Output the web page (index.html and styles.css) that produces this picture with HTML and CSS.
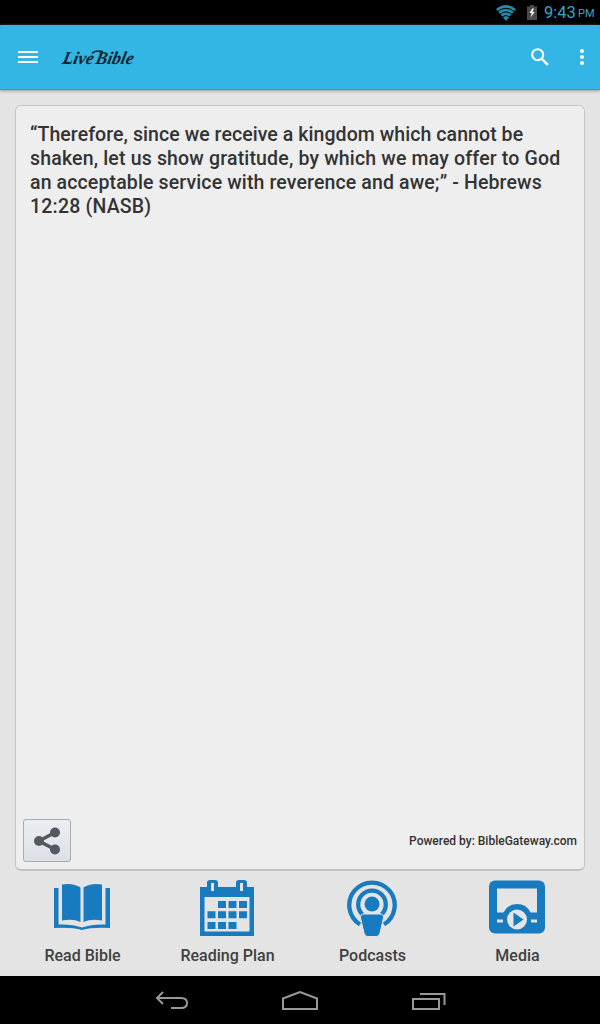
FILE: index.html
```html
<!DOCTYPE html>
<html lang="en">
<head>
<meta charset="utf-8">
<title>LiveBible</title>
<link rel="stylesheet" href="styles.css">
</head>
<body>
<div class="status">
  <svg class="wifi" width="20" height="16" viewBox="0 0 20 16"><path d="M0 4Q10-3.800 20 4L10 16Z" fill="#2689ae"/><g fill="none" stroke="#000" stroke-width="1"><path d="M1 7Q10-.5 19 7M3.500 9.800Q10 4 16.500 9.800M6 12.300Q10 9 14 12.300"/></g></svg>
  <svg class="battery" width="10" height="15" viewBox="0 0 10 15"><path d="M3 0h4v1.500h3V15H0V1.500h3Z" fill="#4a4a4a"/><path d="M5.300 3.500 2.500 8h2.300l-1.300 4.500L7.700 7H5.400l1.600-3.500Z" fill="#fff"/></svg>
  <span class="time">9:43</span><span class="pm">PM</span>
</div>
<header class="bar">
  <svg class="menu" width="20" height="12" viewBox="0 0 20 12"><path d="M0 1h20M0 6h20M0 11h20" stroke="#fff" stroke-width="2"/></svg>
  <svg class="logo" width="76" height="26" viewBox="0 0 76 26"><g transform="translate(4 0) skewX(-12)"><text x="2" y="20" textLength="31" lengthAdjust="spacingAndGlyphs">Live</text><text x="35" y="20" textLength="38" lengthAdjust="spacingAndGlyphs">Bible</text></g><path d="M32 9.500Q35 6 43 7.500M2 19.800Q5 17.500 11 19.500" fill="none" stroke="#10252e" stroke-width="1.400"/></svg>
  <svg class="search" width="18" height="18" viewBox="0 0 18 18" fill="none" stroke="#fff"><circle cx="6.700" cy="6.700" r="5.500" stroke-width="2.100"/><path d="m10.800 10.800 6 6" stroke-width="2.500"/></svg>
  <svg class="more" width="4" height="16" viewBox="0 0 4 16" fill="#fff"><circle cx="2" cy="2" r="2"/><circle cx="2" cy="8" r="2"/><circle cx="2" cy="14" r="2"/></svg>
</header>
<main class="content">
  <section class="card">
    <p class="verse"><span class="l1">“Therefore, since we receive a kingdom which cannot be</span><br><span class="l2">shaken, let us show gratitude, by which we may offer to God</span><br><span class="l3">an acceptable service with reverence and awe;” - Hebrews</span><br><span class="l4">12:28 (NASB)</span></p>
    <div class="foot">
      <button class="share" aria-label="Share"><svg width="28" height="28" viewBox="0 0 28 28" fill="#505a62"><path d="M22 5.500 6 14l16 8.500" fill="none" stroke="#505a62" stroke-width="3.600"/><circle cx="6" cy="14" r="5"/><circle cx="22" cy="5.500" r="5"/><circle cx="22" cy="22.500" r="5"/></svg></button>
      <span class="credit">Powered by: BibleGateway.com</span>
    </div>
  </section>
  <nav class="links">
    <a class="link"><svg width="56" height="58" viewBox="0 0 56 58" fill="#187abf"><path d="M0 9h4.500v36.500Q18 45 28 48.500 38 45 51.500 45.500V9H56v40Q38 48 28 51 18 48 0 49Z"/><path d="M8 5.500Q19 3.500 26.500 8.500V43Q19 39.500 8 41.500ZM48 5.500Q37 3.500 29.500 8.500V43Q37 39.500 48 41.500Z"/></svg><span>Read Bible</span></a>
    <a class="link"><svg width="54" height="58" viewBox="0 0 54 58"><path d="M0 8h7V4q0-3 3-3h5q3 0 3 3v4h18V4q0-3 3-3h5q3 0 3 3v4h7v49H0ZM4.500 18v34.500h45V18ZM11 4v8h3V4Zm29 0v8h3V4Z" fill="#187abf" fill-rule="evenodd"/><path d="M18 22h8v7h-8Zm10.500 0h8v7h-8ZM39 22h8v7h-8ZM7.500 32.300h8v7h-8Zm10.500 0h8v7h-8Zm10.500 0h8v7h-8Zm10.500 0h8v7h-8ZM7.500 43h8v7h-8ZM18 43h8v7h-8Zm10.500 0h8v7h-8Z" fill="#187abf"/></svg><span>Reading Plan</span></a>
    <a class="link"><svg width="52" height="58" viewBox="0 0 52 58"><g fill="none" stroke="#187abf" stroke-width="4.300"><path d="M14 45.500A22.700 22.700 0 1 1 38 45.500"/><path d="M16.500 35.500A13.800 13.800 0 1 1 35.500 35.500"/></g><circle cx="26" cy="25" r="7.500" fill="#187abf"/><path d="M18 35h16q4 0 3.500 4L34 54q-.8 3.500-3.500 3.500h-9q-2.700 0-3.500-3.500L14.500 39q-.5-4 3.500-4Z" fill="#187abf" stroke="#e4e4e4" stroke-width="1"/></svg><span>Podcasts</span></a>
    <a class="link"><svg width="56" height="58" viewBox="0 0 56 58"><rect y="1.500" width="56" height="53" rx="6" fill="#187abf"/><path d="M8 9.500h40v24H41.500A15 15 0 0 0 14.500 33.500H8ZM8 40.500h6v3H8Zm34 0h6v3h-6Z" fill="#e5e5e5"/><circle cx="28" cy="40.500" r="10" fill="#e5e5e5"/><path d="m24.500 33.500 10 7-10 7Z" fill="#187abf"/></svg><span>Media</span></a>
  </nav>
</main>
<footer class="system">
  <svg width="34" height="20" viewBox="0 0 34 20"><path d="M8 1 2 7l6 6M2 7h24q6 0 6 5t-6 5H16"/></svg>
  <svg width="36" height="20" viewBox="0 0 36 20"><path d="M1 7.500 18 1l17 6.500V18H1Z"/></svg>
  <svg width="34" height="20" viewBox="0 0 34 20"><path d="M1 8h26v10H1ZM8 3h24.500v11"/></svg>
</footer>
</body>
</html>
```
FILE: styles.css
```css
* { box-sizing: border-box; }
body { margin: 0; width: 600px; height: 1024px; overflow: hidden; display: flex; flex-direction: column; font-family: Roboto, "Liberation Sans", sans-serif; background: #000; color: #333; }
svg { display: block; flex: none; }
.status { height: 25px; display: flex; justify-content: flex-end; align-items: center; padding-right: 5px; color: #33a5cf; }
.wifi { margin-right: 11px; }
.battery { margin-right: 7px; }
.time { font-size: 16.5px; line-height: 25px; width: 34px; white-space: nowrap; }
.pm { font-size: 11px; line-height: 30px; width: 17px; padding-top: 2px; }
.bar { height: 65px; flex: none; display: flex; align-items: center; padding: 0 16px 1px 18px; background: #33b5e5; border-bottom: 1px solid #628c99; position: relative; box-shadow: 0 1px 3px #999; }
.logo { margin-left: 22px; font: italic bold 18px "Liberation Serif", serif; fill: #10252e; }
.search { margin-left: auto; margin-right: 31px; }
.content { height: 886px; flex: none; padding: 15px 10px 0; background: #e4e4e4; display: flex; flex-direction: column; }
.card { height: 766px; margin: 0 5px; border: 1px solid #c5c5c5; border-bottom: 2px solid #c2c2c2; border-radius: 6px; background: #eee; display: flex; flex-direction: column; justify-content: space-between; padding: 17px 7px 7px; }
.verse { margin: 0 0 0 7px; font-size: 19.5px; font-weight: 500; line-height: 24px; white-space: nowrap; }
.l1 { letter-spacing: .07px; }
.l2 { letter-spacing: .17px; }
.l3 { letter-spacing: .13px; }
.l4 { letter-spacing: .2px; }
.foot { display: flex; justify-content: space-between; align-items: center; }
.share { width: 48px; height: 43px; padding: 0; border: 1px solid #a6acb4; border-radius: 3px; background: linear-gradient(#eceef1, #dce0e7); display: flex; align-items: center; justify-content: center; }
.credit { font-size: 12px; font-weight: 500; }
.links { display: grid; grid-template-columns: repeat(4, 145px); padding-top: 8px; }
.link { display: flex; flex-direction: column; align-items: center; font-size: 16px; font-weight: 500; line-height: 20px; gap: 9px; color: #404040; }
.link svg { margin-right: 2px; }
.system { height: 48px; display: flex; justify-content: space-between; align-items: center; padding: 2px 154px 0 155px; }
.system svg { fill: none; stroke: #999; stroke-width: 2; }
.system svg:nth-child(2) { margin-right: 2px; }
```
